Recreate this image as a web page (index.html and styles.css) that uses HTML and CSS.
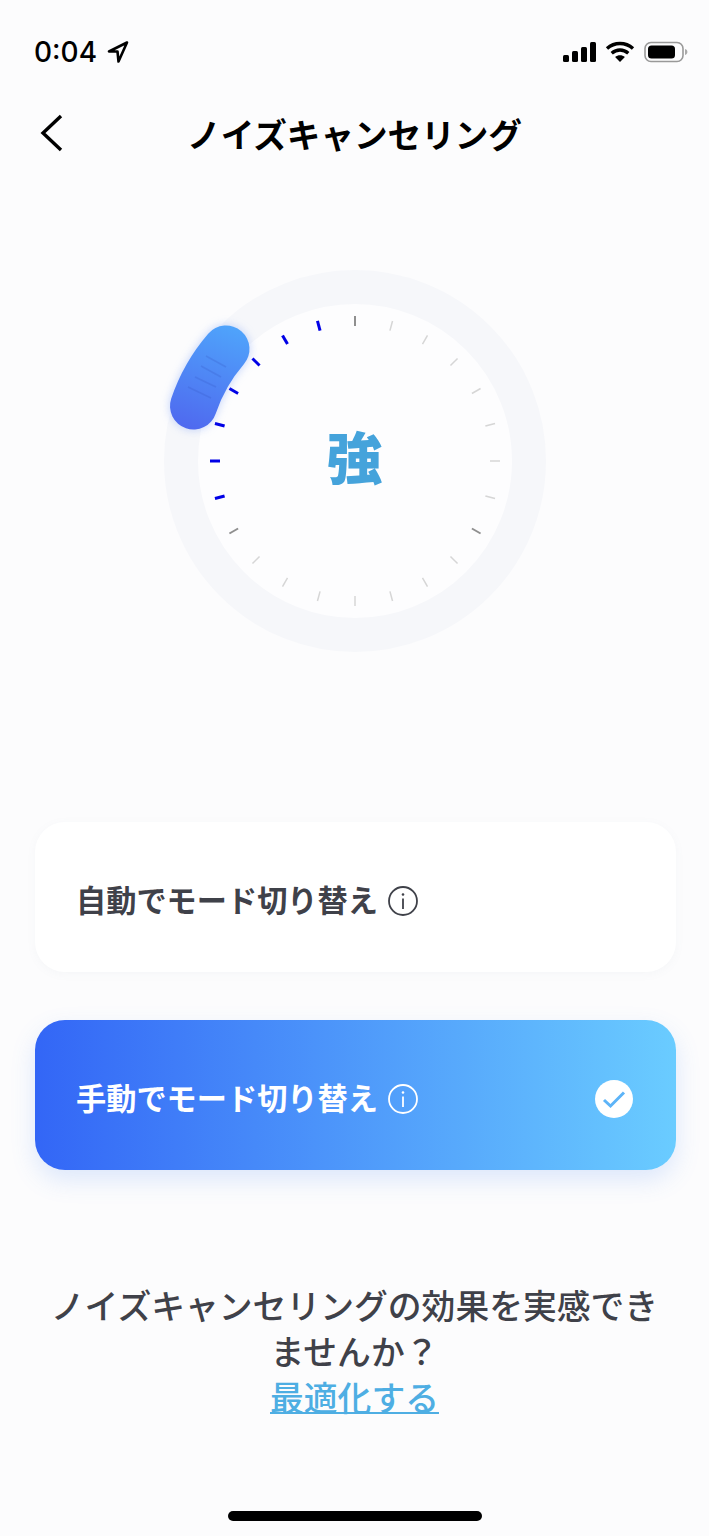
FILE: index.html
```html
<!DOCTYPE html>
<html lang="ja">
<head>
    <meta charset="UTF-8">
    <meta name="viewport" content="width=device-width, initial-scale=1.0">
    <title>ノイズキャンセリング</title>
    <link rel="stylesheet" href="styles.css">
</head>
<body>
    <div class="screen">
        <!-- Status bar -->
        <div class="status-bar">
            <div class="status-left">
                <span class="time">0:04</span>
                <svg class="location" width="22" height="24" viewBox="0 0 22 24">
                    <path d="M20 2.500 2 11.500h8.500l1 10z" fill="none" stroke="#000" stroke-width="2.600" stroke-linejoin="round"/>
                </svg>
            </div>
            <div class="status-right">
                <svg width="33" height="22" viewBox="0 0 33 22">
                    <rect x="0" y="14" width="6" height="7" rx="1.5"/>
                    <rect x="9" y="10" width="6" height="11" rx="1.5"/>
                    <rect x="18" y="6" width="6" height="15" rx="1.5"/>
                    <rect x="27" y="1" width="6" height="20" rx="1.5"/>
                </svg>
                <svg width="30" height="22" viewBox="0 0 30 22">
                    <path d="M2 7.500C9.500.8 20.500.8 28 7.500M6.700 12.300c5-4.400 11.600-4.400 16.600 0" fill="none" stroke="#000" stroke-width="3.400"/>
                    <path d="M15 21l-4.900-5c2.800-2.400 7-2.400 9.800 0z"/>
                </svg>
                <svg width="44" height="22" viewBox="0 0 44 22">
                    <rect x="1" y="1.500" width="38" height="19" rx="6" fill="none" stroke="#999" stroke-width="1.600"/>
                    <rect x="4" y="4.500" width="27" height="13" rx="3.500"/>
                    <path d="M41 8c1.600.4 2.400 1.600 2.400 3s-.8 2.600-2.400 3z" fill="#aaa"/>
                </svg>
            </div>
        </div>

        <!-- Header -->
        <div class="nav">
            <svg class="back" width="26" height="40" viewBox="0 0 26 40">
                <path d="M22 3 4 20l18 17" fill="none" stroke="#000" stroke-width="3.400"/>
            </svg>
            <h1>ノイズキャンセリング</h1>
        </div>

        <!-- Dial -->
        <div class="dial">
            <svg width="400" height="400" viewBox="-200 -200 400 400">
                <defs>
                    <linearGradient id="knobFill" gradientUnits="userSpaceOnUse" x1="-128" y1="-135" x2="-162" y2="-30">
                        <stop offset="0" stop-color="#4fa3fb"/>
                        <stop offset="1" stop-color="#4f69ef"/>
                    </linearGradient>
                </defs>
                <circle class="ring" r="174"/>

                <line class="tick mid" y1="-145" y2="-135"/>
                <line class="tick" y1="-145" y2="-135" transform="rotate(15)"/>
                <line class="tick" y1="-145" y2="-135" transform="rotate(30)"/>
                <line class="tick" y1="-145" y2="-135" transform="rotate(45)"/>
                <line class="tick" y1="-145" y2="-135" transform="rotate(60)"/>
                <line class="tick" y1="-145" y2="-135" transform="rotate(75)"/>
                <line class="tick" y1="-145" y2="-135" transform="rotate(90)"/>
                <line class="tick" y1="-145" y2="-135" transform="rotate(105)"/>
                <line class="tick mid" y1="-145" y2="-135" transform="rotate(120)"/>
                <line class="tick" y1="-145" y2="-135" transform="rotate(135)"/>
                <line class="tick" y1="-145" y2="-135" transform="rotate(150)"/>
                <line class="tick" y1="-145" y2="-135" transform="rotate(165)"/>
                <line class="tick" y1="-145" y2="-135" transform="rotate(180)"/>
                <line class="tick" y1="-145" y2="-135" transform="rotate(195)"/>
                <line class="tick" y1="-145" y2="-135" transform="rotate(210)"/>
                <line class="tick" y1="-145" y2="-135" transform="rotate(225)"/>
                <line class="tick mid" y1="-145" y2="-135" transform="rotate(240)"/>
                <line class="tick on" y1="-145" y2="-135" transform="rotate(255)"/>
                <line class="tick on" y1="-145" y2="-135" transform="rotate(270)"/>
                <line class="tick on" y1="-145" y2="-135" transform="rotate(285)"/>
                <line class="tick on" y1="-145" y2="-135" transform="rotate(300)"/>
                <line class="tick on" y1="-145" y2="-135" transform="rotate(315)"/>
                <line class="tick on" y1="-145" y2="-135" transform="rotate(330)"/>
                <line class="tick on" y1="-145" y2="-135" transform="rotate(345)"/>

                <path class="knob" d="M-129 -112A171 171 0 0 0-161.500 -55"/>
                <path class="grip" d="M-149 -105l20 11M-154 -95l20 11M-160 -84l21 10M-167 -74l23 11"/>
            </svg>
            <div class="dial-value">強</div>
        </div>

        <!-- Mode options -->
        <div class="modes">
            <div class="mode">
                <span class="mode-label">自動でモード切り替え</span>
                <svg class="info" width="30" height="30" viewBox="0 0 30 30">
                    <circle cx="15" cy="15" r="14" fill="none" stroke="currentColor" stroke-width="1.800"/>
                    <path d="M15 12.500V23" stroke="currentColor" stroke-width="1.800"/>
                    <circle cx="15" cy="8.500" r="1.300" fill="currentColor"/>
                </svg>
            </div>
            <div class="mode active">
                <span class="mode-label">手動でモード切り替え</span>
                <svg class="info" width="30" height="30" viewBox="0 0 30 30">
                    <circle cx="15" cy="15" r="14" fill="none" stroke="currentColor" stroke-width="1.800"/>
                    <path d="M15 12.500V23" stroke="currentColor" stroke-width="1.800"/>
                    <circle cx="15" cy="8.500" r="1.300" fill="currentColor"/>
                </svg>
                <svg class="check" width="38" height="38" viewBox="0 0 38 38">
                    <circle cx="19" cy="19" r="19" fill="#fff"/>
                    <path d="M9 20l6.500 6L29 12.500" fill="none" stroke="#5db4f8" stroke-width="3"/>
                </svg>
            </div>
        </div>

        <!-- Footer note -->
        <p class="note">ノイズキャンセリングの効果を実感できませんか？<br><a href="#">最適化する</a></p>

        <div class="home-bar"></div>
    </div>
</body>
</html>
```

FILE: styles.css
```css
* {
    margin: 0;
    padding: 0;
    box-sizing: border-box;
}

body {
    font-family: "Inter", "Noto Sans CJK JP", sans-serif;
    background: #fcfcfd;
}

.screen {
    display: flex;
    flex-direction: column;
    height: 1536px;
    overflow: hidden;
}

.status-bar {
    display: flex;
    justify-content: space-between;
    align-items: center;
    height: 88px;
    padding: 16px 21px 0 34px;
}

.status-left {
    display: flex;
    align-items: center;
    gap: 10px;
}

.time {
    font-size: 28px;
    font-weight: 500;
    color: #000;
}

.status-right {
    display: flex;
    align-items: center;
    gap: 9px;
}

.nav {
    position: relative;
    display: flex;
    justify-content: center;
    align-items: center;
    height: 90px;
}

.nav h1 {
    font-family: "Noto Sans CJK JP", sans-serif;
    font-size: 33.6px;
    font-weight: 700;
    color: #000;
}

.back {
    position: absolute;
    left: 39px;
    top: 25px;
}

.dial {
    position: relative;
    width: 400px;
    height: 400px;
    margin: 83px auto 0;
}

.ring {
    fill: #fdfdfe;
    stroke: #f6f7fa;
    stroke-width: 34;
}

.tick {
    stroke: #d6d6d6;
    stroke-width: 1.5;
}

.tick.mid {
    stroke: #8f8f8f;
    stroke-width: 2;
}

.tick.on {
    stroke: #0000e6;
    stroke-width: 3;
}

.knob {
    fill: none;
    stroke: url(#knobFill);
    stroke-width: 47;
    stroke-linecap: round;
    filter: drop-shadow(0 0 5px rgba(79, 130, 245, 0.35));
}

.grip {
    fill: none;
    stroke: rgba(52, 84, 190, 0.22);
    stroke-width: 1.5;
}

.dial-value {
    position: absolute;
    inset: 0;
    display: flex;
    justify-content: center;
    align-items: center;
    padding-bottom: 14px;
    font-family: "Noto Sans CJK JP", sans-serif;
    font-size: 56px;
    font-weight: 900;
    color: #45a3db;
}

.modes {
    display: flex;
    flex-direction: column;
    gap: 48px;
    margin: 161px 33px 0 35px;
}

.mode {
    display: flex;
    align-items: center;
    gap: 10px;
    height: 150px;
    padding: 7px 43px 0 41px;
    background: #fff;
    border-radius: 30px;
    box-shadow: 0 2px 10px rgba(120, 130, 160, 0.05);
    color: #3f4149;
}

.mode.active {
    background: linear-gradient(90deg, #3366f6 0%, #6accff 100%);
    box-shadow: 0 10px 24px rgba(80, 140, 245, 0.18);
    color: #fff;
}

.mode-label {
    margin-bottom: 4px;
    font-family: "Noto Sans CJK JP", sans-serif;
    font-size: 30.2px;
    font-weight: 700;
}

.check {
    margin-left: auto;
}

.note {
    margin-top: 112px;
    padding: 0 45px;
    font-family: "Noto Sans CJK JP", sans-serif;
    font-size: 33.8px;
    font-weight: 500;
    line-height: 46px;
    text-align: center;
    color: #3f4149;
}

.note a {
    color: #4eaee3;
    text-decoration-thickness: 2px;
}

.home-bar {
    width: 254px;
    height: 10px;
    margin: auto auto 15px;
    background: #000;
    border-radius: 5px;
}
```
